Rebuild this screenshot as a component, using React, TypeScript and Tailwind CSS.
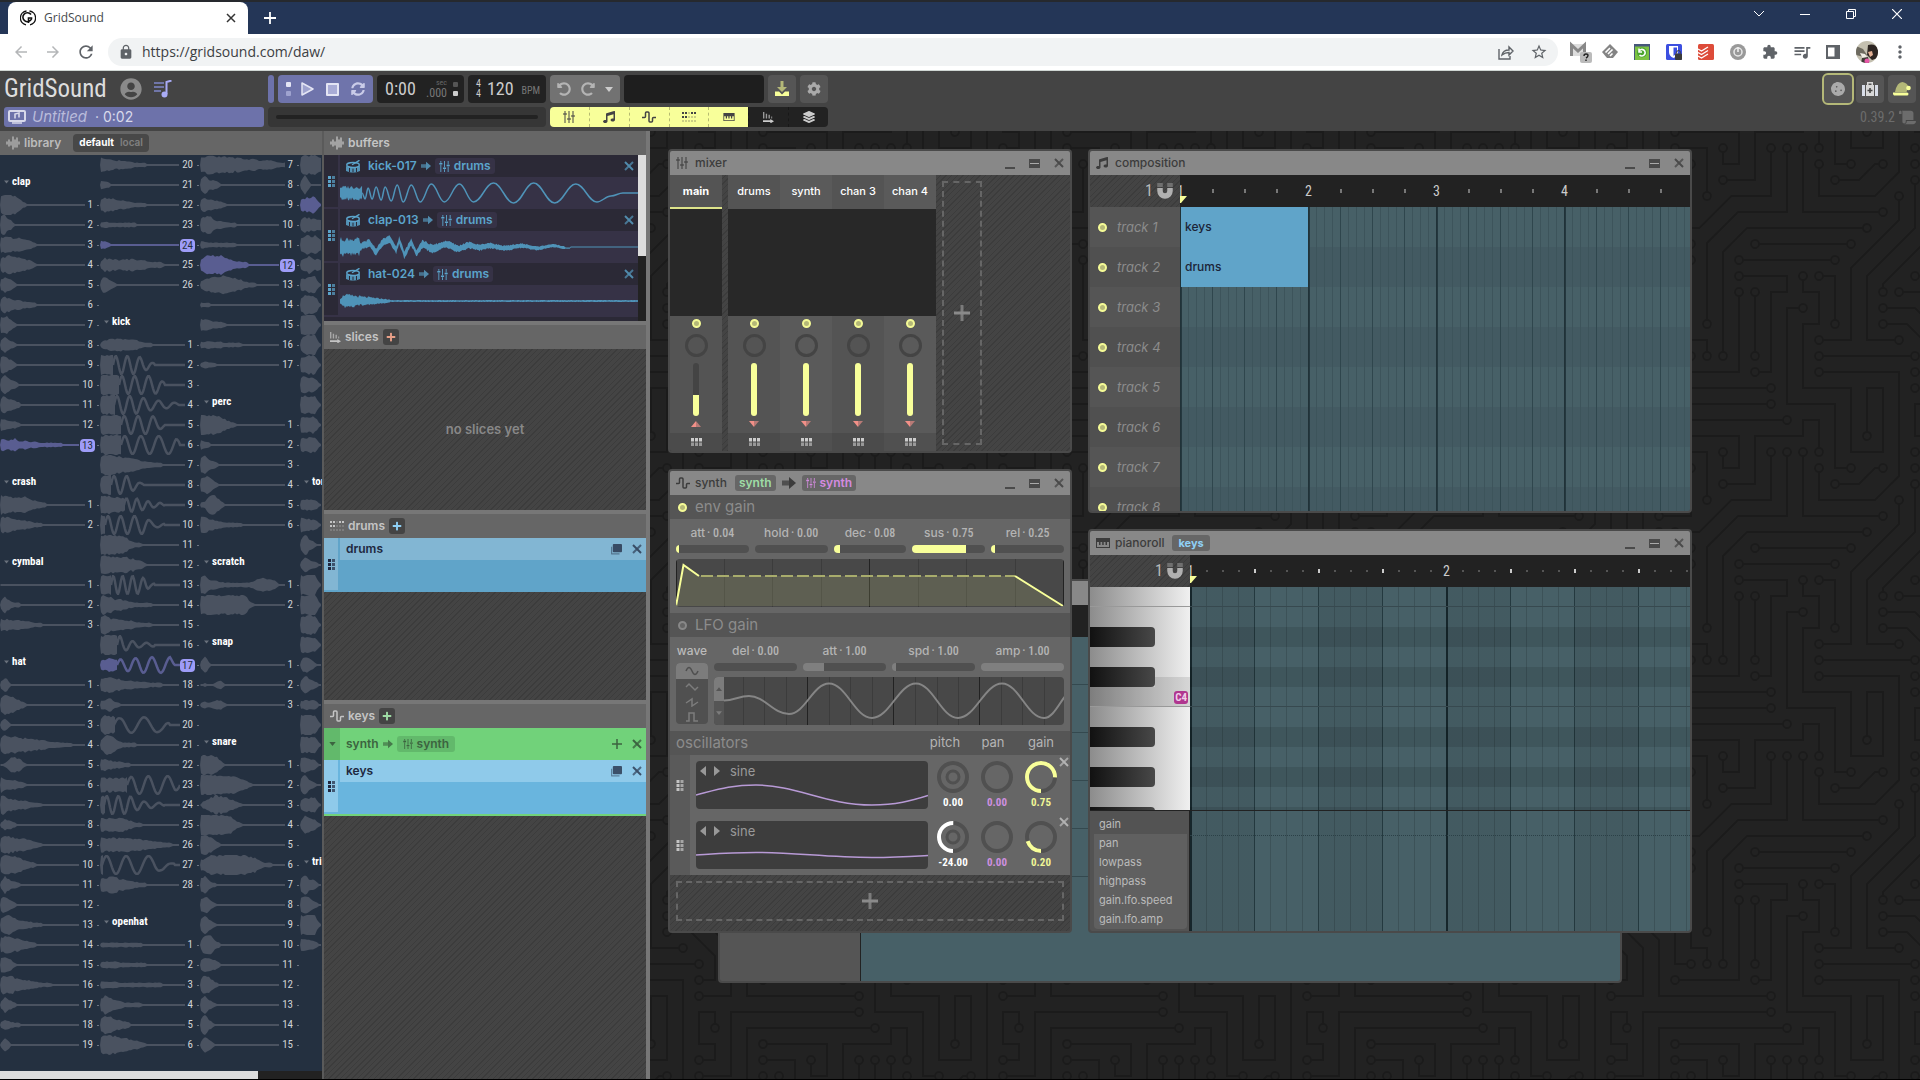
import React from "react";
import {
  MdArrowBack, MdArrowForward, MdRefresh, MdLock, MdStarBorder, MdExtension, MdQueueMusic, MdMoreVert,
} from "react-icons/md";
import {
  FaUserCircle, FaSyncAlt, FaUndoAlt, FaRedoAlt, FaCog, FaLayerGroup, FaCookie, FaScroll, FaMusic, FaPlus,
} from "react-icons/fa";

/* ---------- shared classes ---------- */
const UI = "font-['Inter','Noto_Sans',sans-serif]";
const NARROW = "font-['Roboto_Condensed','Roboto',sans-serif]";
const STRIPES = "bg-[repeating-linear-gradient(135deg,#444_0px,#444_3px,#3c3c3c_3px,#3c3c3c_4px)]";

/* ---------- circuit board backdrop ---------- */
const CIRCUIT =
  "M44.1 224a5 5 0 1 1 0 2H0v-2h44.1zm160 48a5 5 0 1 1 0 2H82v-2h122.1zm57.8-46a5 5 0 1 1 0-2H304v2h-42.1zm0 16a5 5 0 1 1 0-2H304v2h-42.1zm6.2-114a5 5 0 1 1 0 2h-86.2a5 5 0 1 1 0-2h86.2zm-256-48a5 5 0 1 1 0 2H0v-2h12.1zm185.8 34a5 5 0 1 1 0-2h86.2a5 5 0 1 1 0 2h-86.2zM258 12.1a5 5 0 1 1-2 0V0h2v12.1zm-64 208a5 5 0 1 1-2 0v-54.2a5 5 0 1 1 2 0v54.2zm48-198.2V80h62v2h-64V21.9a5 5 0 1 1 2 0zm16 16V64h46v2h-48V37.9a5 5 0 1 1 2 0zm-128 96V208h16v12.1a5 5 0 1 1-2 0V210h-16v-76.1a5 5 0 1 1 2 0zm-5.9-21.9a5 5 0 1 1 0 2H114v48H85.9a5 5 0 1 1 0-2H112v-48h12.1zm-6.2 130a5 5 0 1 1 0-2H176v-74.1a5 5 0 1 1 2 0V242h-60.1zm-16-64a5 5 0 1 1 0-2H114v48h10.1a5 5 0 1 1 0 2H112v-48h-10.1zM66 284.1a5 5 0 1 1-2 0V274H50v30h-2v-32h18v12.1zM236.1 176a5 5 0 1 1 0 2H226v94h48v32h-2v-30h-48v-98h12.1zm25.8-30a5 5 0 1 1 0-2H274v44.1a5 5 0 1 1-2 0V146h-10.1zm-64 96a5 5 0 1 1 0-2H208v-80h16v-14h-42.1a5 5 0 1 1 0-2H226v18h-16v80h-12.1zm86.2-210a5 5 0 1 1 0 2H272V0h2v32h10.1zM98 101.9V146H53.9a5 5 0 1 1 0-2H96v-42.1a5 5 0 1 1 2 0zM53.9 34a5 5 0 1 1 0-2H80V0h2v34H53.9zm60.1 3.9V66H82v64H69.9a5 5 0 1 1 0-2H80V64h32V37.9a5 5 0 1 1 2 0zM101.9 82a5 5 0 1 1 0-2H128V37.9a5 5 0 1 1 2 0V82h-28.1zm16-64a5 5 0 1 1 0-2H146v44.1a5 5 0 1 1-2 0V18h-26.1zm102.2 270a5 5 0 1 1 0 2H98v14h-2v-16h124.1zM242 149.9V160h16v34h-16v62h48v48h-2v-46h-48v-66h16v-30h-16v-12.1a5 5 0 1 1 2 0zM53.9 18a5 5 0 1 1 0-2H64V2H48V0h18v18H53.9zm112 32a5 5 0 1 1 0-2H192V0h50v2h-48v48h-28.1zm-48-48a5 5 0 0 1-9.8-2h2.07a3 3 0 1 0 5.66 0H178v34h-18V21.9a5 5 0 1 1 2 0V32h14V2h-58.1zm0 96a5 5 0 1 1 0-2H137l32-32h39V21.9a5 5 0 1 1 2 0V66h-40.17l-32 32H117.9zm28.1 90.1a5 5 0 1 1-2 0v-76.51L175.59 80H224V21.9a5 5 0 1 1 2 0V82h-49.59L146 112.41v75.69zm16 32a5 5 0 1 1-2 0v-99.51L184.59 96H300.1a5 5 0 0 1 3.9-3.9v2.07a3 3 0 0 0 0 5.66v2.07a5 5 0 0 1-3.9-3.9H185.41L162 121.41v98.69zm-144-64a5 5 0 1 1-2 0v-3.51l48-48V48h32V0h2v50H66v55.41l-48 48v2.69zM50 53.9v43.51l-48 48V208h26.1a5 5 0 1 1 0 2H0v-65.41l48-48V53.9a5 5 0 1 1 2 0zm-16 16V89.41l-34 34v-2.82l32-32V69.9a5 5 0 1 1 2 0zM12.1 32a5 5 0 1 1 0 2H9.41L0 43.41V40.6L8.59 32h3.51zm265.8 18a5 5 0 1 1 0-2h18.69l7.41-7.41v2.82L297.41 50H277.9zm-16 160a5 5 0 1 1 0-2H288v-71.41l16-16v2.82l-14 14V210h-28.1zm-208 32a5 5 0 1 1 0-2H64v-22.59L40.59 194H21.9a5 5 0 1 1 0-2H41.41L66 216.59V242H53.9zm150.2 14a5 5 0 1 1 0 2H96v-56.6L56.6 162H37.9a5 5 0 1 1 0-2h19.5L98 200.6V256h106.1zm-150.2 2a5 5 0 1 1 0-2H80v-46.59L48.59 178H21.9a5 5 0 1 1 0-2H49.41L82 208.59V258H53.9zM34 39.8v1.61L9.41 66H0v-2h8.59L32 40.59V0h2v39.8zM2 300.1a5 5 0 0 1 3.9 3.9H3.83A3 3 0 0 0 0 302.17V256h18v48h-2v-46H2v42.1zM34 241v63h-2v-62H0v-2h34v1zM17 18H0v-2h16V0h2v18h-1zm273-2h14v2h-16V0h2v16zm-32 273v15h-2v-14h-14v14h-2v-16h18v1zM0 92.1A5.02 5.02 0 0 1 6 97a5 5 0 0 1-6 4.9v-2.07a3 3 0 1 0 0-5.66V92.1zM80 272h2v32h-2v-32zm37.9 32h-2.07a3 3 0 0 0-5.66 0h-2.07a5 5 0 0 1 9.8 0zM5.9 0A5.02 5.02 0 0 1 0 5.9V3.83A3 3 0 0 0 3.83 0H5.9zm294.2 0h2.07A3 3 0 0 0 304 3.83V5.9a5 5 0 0 1-3.9-5.9zm3.9 300.1v2.07a3 3 0 0 0-1.83 1.83h-2.07a5 5 0 0 1 3.9-3.9z";

/* Centres of the round pads that end each trace. */
function padCentres(d: string): [number, number][] {
  const tokens = d.match(/[a-zA-Z]|-?\d*\.?\d+/g) || [];
  const out: [number, number][] = [];
  let x = 0, y = 0, sx = 0, sy = 0, i = 0, cmd = "";
  const n = () => parseFloat(tokens[i++]);
  while (i < tokens.length) {
    if (/[a-zA-Z]/.test(tokens[i])) cmd = tokens[i++];
    if (cmd === "z") { x = sx; y = sy; continue; }
    if (cmd === "M") { x = n(); y = n(); sx = x; sy = y; cmd = "L"; }
    else if (cmd === "m") { x += n(); y += n(); sx = x; sy = y; cmd = "l"; }
    else if (cmd === "L") { x = n(); y = n(); }
    else if (cmd === "l") { x += n(); y += n(); }
    else if (cmd === "H") x = n();
    else if (cmd === "h") x += n();
    else if (cmd === "V") y = n();
    else if (cmd === "v") y += n();
    else if (cmd === "A" || cmd === "a") {
      const r = n(); n(); n();
      const large = n(); n();
      let dx = n(), dy = n();
      if (cmd === "A") { dx -= x; dy -= y; }
      if (r === 5 && large === 1) out.push([x + dx / 2 + dy * 2.45, y + dy / 2 - dx * 2.45]);
      x += dx; y += dy;
    } else i++;
  }
  return out;
}
const PADS = padCentres(CIRCUIT);

function Backdrop() {
  return (
    <svg className="absolute inset-0 h-full w-full" aria-hidden="true">
      <defs>
        <pattern id="circuit" width="304" height="304" patternUnits="userSpaceOnUse">
          <path d={CIRCUIT} fill="#1b1b1b" />
          {PADS.map(([cx, cy], k) => <circle key={k} cx={cx} cy={cy} r="3" fill="#222" />)}
        </pattern>
      </defs>
      <rect width="100%" height="100%" fill="url(#circuit)" />
    </svg>
  );
}

/* ---------- icons ---------- */
type IconProps = { className?: string };
const Faders = ({ className = "" }: IconProps) => (
  <svg viewBox="0 0 12 12" className={className} fill="none" stroke="currentColor" strokeWidth="1">
    <path d="M2 0v2M2 4v8M6 0v7M6 9v3M10 0v4M10 6v6" />
    <path d="M.3 3h3.4M4.3 8h3.4M8.3 5h3.4" strokeWidth="1.6" />
  </svg>
);
const Pulse = ({ className = "" }: IconProps) => (
  <svg viewBox="0 0 14 12" className={className} fill="none" stroke="currentColor" strokeWidth="1.5">
    <path d="M0 6.500h2.500q1 0 1-1V2q0-1 1-1H6q1 0 1 1v8q0 1 1 1h1.500q1 0 1-1V7.500q0-1 1-1H14" />
  </svg>
);
const Dots = ({ className = "" }: IconProps) => (
  <svg viewBox="0 0 14 10" className={className} fill="currentColor">
    {[0, 1, 2, 3, 4].map((c) => [0, 1, 2].map((r) => {
      const big = (r === 0 && c !== 2) || (r === 1 && c < 2);
      const s = big ? 2 : 1;
      return <rect key={`${c}-${r}`} x={c * 3 + (2 - s) / 2} y={r * 4 + (2 - s) / 2} width={s} height={s} />;
    }))}
  </svg>
);
const PianoIcon = ({ className = "" }: IconProps) => (
  <svg viewBox="0 0 14 10" className={className} fill="currentColor">
    <path d="M0 0h14v4H0zM0 4h1v6H0zM13 4h1v6h-1zM0 9h14v1H0zM3 4h1.500v3H3zM6.200 4h1.500v3H6.200zM9.500 4H11v3H9.500z" />
  </svg>
);
const SlicesIcon = ({ className = "" }: IconProps) => (
  <svg viewBox="0 0 12 12" className={className} fill="currentColor">
    <path d="M0 0h1.500v7H0zM3 2h1.500v5H3zM6 3h1.500v4H6zM9 5h1v2H9z" opacity=".7" />
    <path d="M0 9h8V7.500l4 2.500-4 2.500V11H0z" />
  </svg>
);
const Sound = ({ className = "" }: IconProps) => (
  <svg viewBox="0 0 14 14" className={className} stroke="currentColor" strokeWidth="1.300" strokeLinecap="round">
    <path d="M1 6v2M3 4v6M5 6v3M7 1v12M9 4v7M11 2v9M13 6v2" />
  </svg>
);
const Drum = ({ className = "" }: IconProps) => (
  <svg viewBox="0 0 14 13" className={className}>
    <path d="M0 6q7 3.500 14 0v5q-7 3.500-14 0z" fill="currentColor" opacity=".85" />
    <path d="M3.500 8v4M7 8.500v4M10.500 8v4" stroke="#2b2936" strokeWidth="1" />
    <ellipse cx="7" cy="5" rx="6.300" ry="2.500" fill="none" stroke="currentColor" strokeWidth="1.400" />
    <path d="M6.500 4.500L13 .7" stroke="currentColor" strokeWidth="1.400" strokeLinecap="round" />
  </svg>
);
const Magnet = ({ className = "" }: IconProps) => (
  <svg viewBox="0 0 16 16" className={className} fill="none">
    <path d="M3 5v3a5 5 0 0 0 10 0V5" stroke="#b0b0b0" strokeWidth="5.500" />
    <path d="M.2 0h5.600v4H.2zM10.200 0h5.600v4h-5.600z" fill="#707070" />
  </svg>
);
const Arrow = ({ className = "" }: IconProps) => (
  <svg viewBox="0 0 14 12" className={className} fill="currentColor">
    <path d="M0 3.500h8v5H0z" opacity=".75" /><path d="M7 0l7 6-7 6z" />
  </svg>
);
const Cross = ({ className = "" }: IconProps) => (
  <svg viewBox="0 0 10 10" className={className} stroke="currentColor" strokeWidth="2">
    <path d="M1 1l8 8" /><path d="M9 1l-8 8" opacity=".8" />
  </svg>
);
const Grip = ({ className = "" }: IconProps) => (
  <svg viewBox="0 0 7 11" className={className} fill="currentColor">
    {[0, 4, 8].map((y) => <g key={y}><rect x="0" y={y} width="3" height="3" /><rect x="4" y={y} width="3" height="3" opacity=".7" /></g>)}
  </svg>
);
const Copy = ({ className = "" }: IconProps) => (
  <svg viewBox="0 0 12 12" className={className} fill="currentColor">
    <path d="M3 0h8q1 0 1 1v7q0 1-1 1H3q-1 0-1-1V1q0-1 1-1z" />
    <path d="M0 3h1.300v7h8v1.500H1q-1 0-1-1z" opacity=".6" />
  </svg>
);
const Caret = ({ className = "" }: IconProps) => (
  <svg viewBox="0 0 8 5" className={className} fill="currentColor"><path d="M0 0h8L4 5z" /></svg>
);
const Led = ({ on = true }: { on?: boolean }) => (
  <span className={on ? "block size-[9px] rounded-full border-2 border-[#f4fa96] bg-[#b4b878]" : "block size-[9px] rounded-full border-2 border-[#888] bg-[#666]"} />
);

/* ---------- waveforms ---------- */
function noise(i: number, seed: number) {
  const v = Math.sin(i * 12.9898 + seed * 78.233) * 43758.5453;
  return v - Math.floor(v);
}
/* env: one digit (0-9) for each 5px; osc: [start, period] turns the tail into a line that swings. */
function Wave({ env, w, seed, hot, osc }: { env: string; w: number; seed: number; hot?: boolean; osc?: [number, number] }) {
  const amp = (x: number) => {
    const p = x / 5, i = Math.floor(p), f = p - i;
    const a = +(env[i] || 1), b = +(env[i + 1] || 1);
    return ((a * (1 - f) + b * f) * 10) / 9;
  };
  const end = osc ? osc[0] : w;
  const up: string[] = [], down: string[] = [];
  for (let x = 1; x <= end; x += 2) {
    const a = amp(x);
    const h = Math.max(1, a > 2 ? a * (0.85 + 0.3 * noise(x, seed)) : 1);
    up.push(`${x},${10 - Math.min(10, h)}`);
    down.unshift(`${x},${10 + Math.min(10, h * (a > 2 ? 0.9 + 0.15 * noise(x, seed + 9) : 1))}`);
  }
  const line: string[] = [];
  if (osc) {
    let ph = 0;
    for (let x = osc[0] - 1; x <= w; x++) {
      line.push(`${x},${10 - Math.min(9, amp(x) > 1.2 ? amp(x) : 0) * Math.sin(ph)}`);
      ph += (Math.PI * 2) / (osc[1] * (1 + (x - osc[0]) / 140));
    }
  }
  const color = hot ? "#595d91" : "#4a5260";
  return (
    <svg width={w} height="20" viewBox={`0 0 ${w} 20`} className="shrink-0" aria-hidden="true">
      <polygon points={[`0,10`, ...up, ...down].join(" ")} fill={color} />
      {osc && <polyline points={line.join(" ")} fill="none" stroke={color} strokeWidth="2.500" />}
    </svg>
  );
}

type Sample = { n: number; env: string; osc?: [number, number]; hot?: boolean };
type Entry = string | Sample[];
/* Space-separated "env", "env@start,period" or "env!"; a trailing ! marks a sample in use. */
function rows(from: number, spec: string): Sample[] {
  return spec.split(" ").map((s, i) => {
    const hot = s.endsWith("!");
    const [env, o] = s.replace("!", "").split("@");
    const osc = o ? (o.split(",").map(Number) as [number, number]) : undefined;
    return { n: from + i, env, osc, hot };
  });
}
const LIBRARY: Entry[][] = [
  [
    "clap", rows(1, "99985211 8851 6876654211 678765421 4852 5854433211 686211 4742 6852 6853 585421 55432111 55463433222221!"),
    "crash", rows(1, "89776854321111 77654432211"),
    "cymbal", rows(1, "11111 3832211111 55544332211111"),
    "hat", rows(1, "2721 69864211 262111 78776655443322211 1267521 75543211 88554432211111 254211 68765643211 688764321 284321 585211 699643322111 6876543211 585211 688654432221 28421 2532211 1721111"),
  ],
  [
    rows(20, "86544432221111 4321 466544322211 2322222211 4321111111! 3655455544333 38421"),
    "kick", rows(1, "24555555322111 999999987531@14,11 9999999999986111@20,12 6999999876544332@15,12 9999999999974111@22,13 8999999999999999@22,15 8998766543322 699999742111@12,12 88876666543221@25,10 99999999974221@6,12 799987422111 888777654211 9999999976211@12,9 88755432222 79655443222 79998543222@18,12 456555667777777@18,14! 6776544333222 44632111 49876777777766@15,22 399632221 5543322 8666667888888887@28,16 7898888543322@5,11 6666654221 666666655443322 99999999999854211@3,18 5677554322"),
    "openhat", rows(1, "2222222221 2333222222 4333222222222 687442222 687543211 799876543211"),
  ],
  [
    rows(7, "678777766555444322 494421111 5654321111 578443221 3322222211 4797975333! 3577887653221 2221111111 5543321111 333332222 232211"),
    "perc", rows(1, "999875321111 5321 58431 68631 238841 785432222"),
    "scratch", rows(1, "68443222222466541 999999999931"),
    "snap", rows(1, "281 1212411 232442"),
    "snare", rows(1, "9998411 999999876421 146887542111 9999998421 898421 468889999876422 583211 58421 68421 389421 47542 59631 48421 594111 2741"),
  ],
  [
    rows(18, "79888 39211 5677! 47655 688855 46855 5677 6888 8998 4999 6899 5866 7888 7777 6677"),
    "tom", rows(1, "4555 6655 3952 2743 9999 8999 7898 8767 3852 3953 3444 9999 8777 6654 5942 4666 3865"),
    "tri", rows(1, "5854 6863 9998 5643"),
  ],
];

function Library() {
  return (
    <div className="flex min-h-0 flex-1 overflow-hidden bg-[#243040]">
      {LIBRARY.map((col, c) => {
        const partial = c === 3;
        return (
          <div key={c} className={partial ? "min-w-0 flex-1 overflow-hidden" : "w-[100px] shrink-0"}>
            {col.map((e, k) =>
              typeof e === "string" ? (
                <button key={k} className={`flex h-10 w-full items-end pb-1 pl-1 text-left text-[11px] leading-[18px] font-bold text-white ${NARROW}`}>
                  <Caret className="mr-[3px] mb-[7px] h-1 w-[5px] shrink-0 text-[#69717c]" />
                  {e}
                </button>
              ) : (
                <div key={k}>
                  {e.map((s) => (
                    <div key={s.n} className="flex h-5 items-center">
                      <Wave env={s.env} w={partial ? 22 : s.hot || s.n > 9 ? 80 : 85} seed={s.n + c * 40 + k} hot={s.hot} osc={s.osc} />
                      {!partial && <>
                        <span className={s.hot
                          ? `block h-[13px] w-[15px] shrink-0 rounded-sm bg-[#9e9cf8] text-center text-[11px] leading-[13px] text-[#243040] ${NARROW}`
                          : `${s.n > 9 ? "w-[13px]" : "w-2"} text-right text-[11px] leading-5 text-[#d0d3d6] ${NARROW}`}>{s.n}</span>
                        <span className={s.hot ? "ml-0.5 h-px w-0.5 bg-[#6b7380]" : "ml-1 h-px w-0.5 bg-[#6b7380]"} />
                      </>}
                    </div>
                  ))}
                </div>
              ),
            )}
          </div>
        );
      })}
    </div>
  );
}

/* Smooth curve through alternating extremes. */
function swing(pts: [number, number][]) {
  let d = `M${pts[0][0]} ${pts[0][1]}`;
  for (let i = 1; i < pts.length; i++) {
    const [ax, ay] = pts[i - 1], [bx, by] = pts[i], m = (bx - ax) * 0.4;
    d += `C${ax + m} ${ay} ${bx - m} ${by} ${bx} ${by}`;
  }
  return d;
}
function blob(w: number, amp: (x: number) => number, mid: (x: number) => number, seed: number) {
  const up: string[] = [], down: string[] = [];
  for (let x = 0; x <= w; x += 1) {
    const a = amp(x);
    up.push(`${x},${16 + mid(x) - a * (0.6 + 0.6 * noise(x, seed)) - 0.5}`);
    down.unshift(`${x},${16 + mid(x) + a * (0.6 + 0.6 * noise(x, seed + 4)) + 0.5}`);
  }
  return [...up, ...down].join(" ");
}
const KICK: [number, number][] = [
  [22, 16], [25, 22], [28, 11], [32, 22], [36, 10], [41, 23], [45, 10], [51, 24], [57, 8], [63, 25], [71, 8], [80, 25], [91, 7], [104, 25], [119, 7], [133, 25],
  [153, 6], [173, 26], [193, 6], [214, 26], [235, 7], [256, 25], [270, 19], [282, 16], [297, 16],
];
const CLAP_MID: [number, number][] = [[20, 0], [29, -4], [36, 5], [42, -4], [49, -8], [56, 3], [59, -7], [64, 8], [71, -5], [76, 6], [82, -3], [92, 2], [106, -3], [118, 2], [128, -2], [140, 1], [297, 0]];
function clapMid(x: number) {
  if (x <= 20 || x >= 140) return x > 140 && x < 230 ? Math.sin(x / 5) * 1.2 : 0;
  const k = CLAP_MID.findIndex((p) => p[0] > x);
  const [ax, ay] = CLAP_MID[k - 1], [bx, by] = CLAP_MID[k];
  return ay + ((by - ay) * (x - ax)) / (bx - ax);
}
const BUFFERS = [
  { name: "kick-017", art: <><polygon points={blob(22, () => 6, () => 0, 3)} fill="#4f93b8" /><path d={swing(KICK)} fill="none" stroke="#4f93b8" strokeWidth="1.500" /></> },
  { name: "clap-013", art: <polygon fill="#4f93b8" points={blob(297, (x) => (x < 20 ? 8 : x < 80 ? 3.2 : x < 225 ? 3.8 - (x - 80) / 50 : 0.1), clapMid, 8)} /> },
  { name: "hat-024", art: <polygon fill="#4f93b8" points={blob(297, (x) => (x < 6 ? 2 + x : x < 50 ? 6.5 - x * 0.11 : 0.4), () => 0, 5)} /> },
];

function BufferItem({ name, art }: { name: string; art?: React.ReactNode }) {
  return (
    <div className="flex h-[54px] shrink-0 gap-0.5 bg-[#363246] text-[#5ba4cb]">
      <div className="mb-0.5 flex w-3.5 items-center justify-center bg-[#2b2936]"><Grip className="h-[11px] w-[7px]" /></div>
      <div className="min-w-0 flex-1">
        <div className="flex h-[22px] items-center bg-[#2b2936] pl-1.5 pr-1 text-xs font-semibold">
          <Drum className="mr-2 h-[13px] w-3.5" />
          {name}
          <Arrow className="mx-1 size-2.5 opacity-80" />
          <button className="flex h-4 items-center gap-1 rounded-[3px] bg-[#363246] px-1"><Faders className="size-[11px]" />drums</button>
          <button aria-label={`Remove ${name}`} className="ml-auto opacity-80"><Cross className="size-2.5" /></button>
        </div>
        <svg className="h-8 w-full" viewBox="0 0 297 32" preserveAspectRatio="none">{art}</svg>
      </div>
    </div>
  );
}

function PanelHead({ icon, title, plus }: { icon: React.ReactNode; title: string; plus?: string }) {
  return (
    <div className="flex h-6 shrink-0 items-center gap-1 bg-[#666] px-1.5 text-xs font-semibold text-[#c4c4c4]">
      {icon}
      <h2>{title}</h2>
      {plus && <button aria-label={`New ${title}`} className={`flex size-4 items-center justify-center rounded-[3px] bg-[#444] ${plus}`}><FaPlus className="size-2.5" /></button>}
    </div>
  );
}

function PatternItem({ name, head, body }: { name: string; head: string; body: string }) {
  return (
    <div className={`flex h-[54px] gap-0.5 text-[#20283f] ${body}`}>
      <div className={`mb-0.5 flex w-3.5 items-center justify-center ${head}`}><Grip className="h-[11px] w-[7px]" /></div>
      <div className={`flex h-[22px] flex-1 items-center pl-1.5 pr-1 text-xs font-semibold ${head}`}>
        {name}
        <button aria-label={`Duplicate ${name}`} className="ml-auto opacity-75"><Copy className="size-[11px]" /></button>
        <button aria-label={`Remove ${name}`} className="ml-2.5 opacity-75"><Cross className="size-2.5" /></button>
      </div>
    </div>
  );
}

/* ---------- window frame ---------- */
function Window({ place, icon, title, extra, children }: { place: string; icon: React.ReactNode; title: string; extra?: React.ReactNode; children: React.ReactNode }) {
  return (
    <section className={`absolute flex flex-col overflow-hidden rounded border-2 border-[#4a4a4a] bg-[#444] ${place}`}>
      <header className="flex h-6 shrink-0 items-center bg-[#888] px-1.5 text-xs font-medium text-[#3c3c3c]">
        <span className="flex w-[19px]">{icon}</span>
        <h2>{title}</h2>
        {extra}
        <div className="ml-auto flex items-center text-[#4a4a4a]">
          <button aria-label="Minimize" className="mr-3.5 flex h-3 w-2.5 items-end"><span className="h-0.5 w-full bg-current" /></button>
          <button aria-label="Maximize" className="mr-3.5 block h-[9px] w-[11px] border border-current bg-current"><span className="block h-px w-full bg-[#aaa]" /></button>
          <button aria-label="Close"><Cross className="size-2.5" /></button>
        </div>
      </header>
      {children}
    </section>
  );
}

/* ---------- sliders and knobs ---------- */
function HSlider({ label, value, fill = "#f8ff9a" }: { label: string; value: number; fill?: string }) {
  return (
    <input type="range" aria-label={label} min={0} max={100} defaultValue={value}
      className="block h-2 w-full appearance-none rounded-sm [&::-webkit-slider-thumb]:size-0 [&::-webkit-slider-thumb]:appearance-none"
      style={{ background: `linear-gradient(to right, ${fill} ${value}%, #505050 ${value}%)` }} />
  );
}
function Knob({ label, color, from, len, inner, text, tone }: { label: string; color: string; from: number; len: number; inner?: boolean; text: string; tone: string }) {
  const C = 2 * Math.PI * 14;
  return (
    <div className="flex w-11 flex-col items-center">
      <div className="relative size-8">
        <svg className="size-8" viewBox="0 0 32 32" fill="none" strokeWidth="4">
          <circle cx="16" cy="16" r="14" stroke="#505050" />
          {inner && <circle cx="16" cy="16" r="6" stroke="#505050" strokeWidth="3" />}
          {len > 0 && <circle cx="16" cy="16" r="14" stroke={color} strokeDasharray={`${C * len} ${C}`} transform={`rotate(${from} 16 16)`} />}
        </svg>
        <input type="range" aria-label={label} className="absolute inset-0 size-8 opacity-0" />
      </div>
      <span className={`pt-px text-[11px] leading-[18px] font-bold ${NARROW} ${tone}`}>{text}</span>
    </div>
  );
}

/* ---------- mixer ---------- */
function Channel({ name, gain, main, alt }: { name: string; gain: number; main?: boolean; alt?: boolean }) {
  return (
    <div className={`flex w-[52px] flex-col items-center ${alt ? "bg-[#5a5a5a]" : "bg-[#545454]"}`}>
      <button className={`h-[34px] w-full border-b-2 pt-px text-[11px] whitespace-nowrap text-white ${main ? "border-[#dde38a] font-bold" : "border-transparent font-medium"}`}>{name}</button>
      <div className="h-[107px] w-full bg-[#282828]" />
      <button aria-label={`Toggle ${name}`} className="mt-[3px]"><Led /></button>
      <span className="mt-1.5 size-[23px] rounded-full border-[3px] border-[#444]" />
      <input type="range" aria-label={`${name} gain`} min={0} max={100} defaultValue={gain}
        className="mt-1.5 h-[53px] w-1.5 appearance-none rounded-sm [writing-mode:vertical-lr] [&::-webkit-slider-thumb]:size-0 [&::-webkit-slider-thumb]:appearance-none"
        style={{ background: `linear-gradient(to top, #f8ff9a ${gain}%, #444 ${gain}%)` }} />
      <svg viewBox="0 0 10 6" className="mt-[5px] h-1.5 w-2.5">
        <g transform={main ? "" : "rotate(180 5 3)"}><path d="M5 0v6H0z" fill={main ? "#f29088" : "#b87a76"} /><path d="M5 0l5 6H5z" fill={main ? "#b87a76" : "#f29088"} /></g>
      </svg>
      <button aria-label={`${name} effects`} className="mt-auto flex h-[18px] w-full items-center justify-center bg-black/10 text-[#ccc]">
        <svg viewBox="0 0 11 8" className="h-2 w-[11px]" fill="currentColor">
          {[0, 4, 8].map((x) => <g key={x}><rect x={x} width="3" height="3.500" /><rect x={x} y="4.500" width="3" height="3.500" opacity=".6" /></g>)}
        </svg>
      </button>
    </div>
  );
}
function AddBox({ label, className }: { label: string; className: string }) {
  return (
    <button aria-label={label} className={`flex items-center justify-center border-2 border-dashed border-[#666] text-[#8a8a8a] ${className}`}>
      <svg viewBox="0 0 16 16" className="size-4" stroke="currentColor" strokeWidth="3"><path d="M8 0v16" opacity=".8" /><path d="M0 8h16" /></svg>
    </button>
  );
}

/* ---------- timelines ---------- */
function Ruler({ step, unit, marks, subs }: { step: number; unit: number; marks: string[]; subs: number }) {
  return (
    <div className={`relative min-w-0 flex-1 overflow-hidden bg-[#222] text-sm text-[#ccc] ${NARROW}`}>
      <div className="flex h-full">
        {marks.map((m) => (
          <div key={m} className="flex h-full shrink-0 items-center" style={{ width: unit }}>
            {Array.from({ length: unit / step }, (_, i) => (
              <span key={i} className="flex shrink-0 items-center" style={{ width: step }}>
                {i === 0 ? <span className="-ml-[3px]">{m}</span>
                  : <span className={i % subs === 0 ? `h-1 w-0.5 ${subs > 1 ? "bg-[#ccc]" : "bg-[#777]"}` : "size-0.5 bg-[#555]"} />}
              </span>
            ))}
          </div>
        ))}
      </div>
      <svg viewBox="0 0 7 7" className="absolute bottom-1 left-0 size-[7px]"><path d="M0 0h7L1 7H0z" fill="#f8ff9a" /></svg>
    </div>
  );
}
const Snap = ({ w }: { w: string }) => (
  <div className={`flex shrink-0 items-center justify-end gap-1 pr-[7px] text-base text-[#bbb] ${NARROW} ${STRIPES} ${w}`}>
    <button>1</button>
    <button aria-label="Snap"><Magnet className="size-4" /></button>
  </div>
);

const COMP_GRID =
  "bg-[repeating-linear-gradient(90deg,#1f2f35_0px,#263b42_2px,transparent_2px,transparent_128px),repeating-linear-gradient(90deg,#2f464d_0px,#2f464d_1px,transparent_1px,transparent_32px),repeating-linear-gradient(90deg,#3d545b_0px,#3d545b_1px,transparent_1px,transparent_8px)]";
const ROLL_GRID =
  "bg-[repeating-linear-gradient(90deg,#16262b_0px,#16262b_2px,transparent_2px,transparent_256px),repeating-linear-gradient(90deg,#24393f_0px,#24393f_1px,transparent_1px,transparent_64px),repeating-linear-gradient(90deg,#00000026_0px,#00000026_1px,transparent_1px,transparent_16px),repeating-linear-gradient(90deg,#0000000f_0px,#0000000f_64px,transparent_64px,transparent_128px)]";

function Composition() {
  return (
    <Window place="left-[438px] top-[18px] h-[364px] w-[604px]" icon={<FaMusic className="size-3" />} title="composition">
      <div className="flex h-8 shrink-0"><Snap w="w-[90px]" /><Ruler step={32} unit={128} subs={1} marks={["1", "2", "3", "4"]} /></div>
      <div className="flex min-h-0 flex-1">
        <div className="w-[90px] shrink-0 overflow-hidden">
          {[1, 2, 3, 4, 5, 6, 7, 8].map((t) => (
            <div key={t} className={`flex h-10 items-center gap-2.5 pt-px pl-2 text-[13px] text-[#8c8c8c] italic ${t % 2 ? "bg-[#555]" : "bg-[#505050]"}`}>
              <button aria-label={`Toggle track ${t}`}><Led /></button>track {t}
            </div>
          ))}
        </div>
        <div className="relative min-w-0 flex-1 overflow-hidden bg-[repeating-linear-gradient(180deg,#476067_0px,#476067_40px,#435a62_40px,#435a62_80px)]">
          <div className={`h-full w-full ${COMP_GRID}`} />
          <div className="absolute top-0 left-px w-[127px] bg-[#60a4c9] text-xs font-medium text-[#1c2538]">
            <div className="flex h-10 items-center pl-1">keys</div>
            <div className="flex h-10 items-center pl-1">drums</div>
          </div>
        </div>
      </div>
    </Window>
  );
}

/* Rows from the top of the visible keyboard: true where the key is black. */
const KEYS = [false, false, true, false, true, false, false, true, false, true, false, true];
const PARAMS = ["pan", "lowpass", "highpass", "gain.lfo.speed", "gain.lfo.amp"];
function PianoRoll() {
  return (
    <Window place="left-[438px] top-[398px] h-[404px] w-[604px]" icon={<PianoIcon className="h-2.5 w-3.5" />} title="pianoroll"
      extra={<button className="ml-2 h-4 rounded-[3px] bg-[#666] px-1.5 text-[11px] leading-4 font-bold text-[#8fd0f5]">keys</button>}>
      <div className="flex h-8 shrink-0"><Snap w="w-[100px]" /><Ruler step={16} unit={256} subs={4} marks={["1", "2"]} /></div>
      <div className="flex h-[223px] shrink-0 overflow-hidden">
        <div className="relative w-[100px] shrink-0 overflow-hidden bg-[linear-gradient(90deg,#8c8c8c,#f0f0f0)]">
          {KEYS.map((black, k) => (
            <div key={k} className={`h-5 ${k === 0 || k === 5 ? "border-b border-[#999]" : ""} ${k === 5 ? "flex items-center justify-end bg-black/10 pt-px pr-0.5" : ""} ${k === 4 ? "flex items-end" : ""}`}>
              {black && <div className="h-5 w-[65px] rounded-r-sm bg-[linear-gradient(90deg,#111,#484848)]" />}
              {k === 4 && <div className="h-2.5 flex-1 bg-black/10" />}
              {k === 5 && <span className={`rounded-[3px] bg-[#b0368f] px-px text-[11px] leading-[13px] font-bold text-[#f0d0e8] ${NARROW}`}>C4</span>}
            </div>
          ))}
        </div>
        <div className={`min-w-0 flex-1 bg-[#476067] ${ROLL_GRID}`}>
          {KEYS.map((black, k) => <div key={k} className={`h-5 ${black ? "bg-black/10" : ""} ${k === 0 || k === 5 ? "border-b border-[#37494f]" : ""}`} />)}
        </div>
      </div>
      <div className="flex min-h-0 flex-1 border-t border-[#222]">
        <div className="w-[100px] shrink-0 border-r border-[#222] bg-[#535353] pt-1 pr-0.5 pl-1 text-[11px] text-[#bbb]">
          <button className="block h-[19px] pl-[5px] leading-[19px]">gain</button>
          <div className="rounded-b bg-[#606060]">
            {PARAMS.map((p) => <button key={p} className="block h-[19px] pl-[5px] leading-[19px]">{p}</button>)}
          </div>
        </div>
        <div className={`min-w-0 flex-1 bg-[#476067] ${ROLL_GRID}`}>
          <div className="h-[25px] border-b border-dotted border-[#2b4047]" />
        </div>
      </div>
    </Window>
  );
}

/* ---------- synth ---------- */
const ENV = [["att", "0.04", 4], ["hold", "0.00", 0], ["dec", "0.08", 8], ["sus", "0.75", 74], ["rel", "0.25", 5]] as const;
const LFO = [["del", "0.00", 0], ["att", "1.00", 25], ["spd", "1.00", 5], ["amp", "1.00", 100]] as const;
const LFO_PATH: [number, number][] = [[0, 23.500], [25, 19], [65, 37], [105, 6.500], [148, 41], [192, 6.500], [234, 41], [278, 6.500], [320, 41], [352, 12]];
const SHAPES = ["M1 5q3-7 6 0t6 0", "M1 5l3-3 6 6 3-3", "M1 6l6-4v7l6-4", "M1 9h3V1h5v8h4"];

const Param = ({ name, v }: { name: string; v: string }) => (
  <div className="flex h-[14px] items-center justify-center text-xs font-medium text-[#b4b4b4]">
    {name}<span className={`ml-0.5 whitespace-pre ${NARROW}`}>· {v}</span>
  </div>
);
function Oscillator({ amp, pitch, pitchLen, gain, gainLen }: { amp: number; pitch: string; pitchLen: number; gain: string; gainLen: number }) {
  return (
    <div className="flex h-[60px] bg-[#666]">
      <div className="flex w-5 items-center justify-center bg-[#5a5a5a] text-[#c4c4c4]"><Grip className="h-[11px] w-2" /></div>
      <div className="relative m-1.5 mr-0.5 h-12 flex-1 rounded bg-[#3d3d3d]">
        <svg className="absolute inset-0 h-full w-full" viewBox="0 0 232 48" preserveAspectRatio="none">
          <path d={`M0 34C20 ${34 - amp * 0.5} 35 ${34 - amp} 60 ${34 - amp}C100 ${34 - amp} 130 ${34 + amp} 176 ${34 + amp}C200 ${34 + amp} 215 ${34 + amp * 0.6} 232 34.500`} fill="none" stroke="#b89ad6" strokeWidth="1.500" />
        </svg>
        <div className="relative flex items-center gap-2 pt-0.5 pl-1 text-[#999]">
          <button aria-label="Previous wave"><svg viewBox="0 0 6 10" className="h-2.5 w-1.5" fill="currentColor"><path d="M6 0v10L0 5z" /></svg></button>
          <button aria-label="Next wave"><svg viewBox="0 0 6 10" className="h-2.5 w-1.5" fill="currentColor"><path d="M0 0v10l6-5z" /></svg></button>
          <span className="pl-0.5 text-[13px] leading-4">sine</span>
        </div>
      </div>
      <div className="relative flex w-[140px] pt-1.5 pl-px">
        <Knob label="pitch" color="#fff" from={90} len={pitchLen} inner text={pitch} tone="text-white" />
        <Knob label="pan" color="#d08be0" from={0} len={0} text="0.00" tone="text-[#cf90e0]" />
        <Knob label="gain" color="#f8ff9a" from={90} len={gainLen} text={gain} tone="text-[#eff596]" />
        <button aria-label="Remove oscillator" className="absolute top-0.5 right-px text-[#b4b4b4]"><Cross className="size-2.5" /></button>
      </div>
    </div>
  );
}
const chip = "flex h-4 items-center gap-1 rounded-[3px] bg-[#666] px-1 text-xs font-semibold";
function Synth() {
  return (
    <Window place="left-[18px] top-[338px] h-[464px] w-[404px]" icon={<Pulse className="h-3 w-3.5" />} title="synth"
      extra={<div className="ml-2 flex items-center gap-1.5"><button className={`${chip} text-[#9fdca5]`}>synth</button><Arrow className="h-3 w-3.5" /><button className={`${chip} text-[#d48be0]`}><Faders className="size-2.5" />synth</button></div>}>
      <div className="flex h-6 shrink-0 items-center gap-2 bg-[#555] pl-2 text-[15px] text-[#8c8c8c]"><button aria-label="Toggle env gain"><Led /></button><h3>env gain</h3></div>
      <div className="h-[94px] shrink-0 bg-[#666] px-1.5 pt-[7px]">
        <div className="flex gap-1.5">
          {ENV.map(([n, v, f]) => <div key={n} className="flex w-0 flex-1 flex-col gap-[5px]"><Param name={n} v={v} /><HSlider label={n} value={f} /></div>)}
        </div>
        <svg className="mt-1.5 h-12 w-full rounded bg-[#484848]" viewBox="0 0 388 48" preserveAspectRatio="none">
          <path d="M48.500 0v48M96.500 0v48M145.500 0v48M242.500 0v48M290.500 0v48M339.500 0v48" stroke="#3c3c3c" />
          <path d="M.5 0v48M193.500 0v48M387.500 0v48" stroke="#222" />
          <path d="M0 47L7.500 6 23 17H339l48 30z" fill="#f8ff9a" fillOpacity=".13" />
          <path d="M25 17H339" stroke="#a8ac6c" strokeWidth="2" strokeDasharray="12 4" />
          <path d="M0 47L7.500 6 23 17M339 17l48 30" stroke="#f8ff9a" strokeWidth="2" fill="none" />
        </svg>
      </div>
      <div className="flex h-6 shrink-0 items-center gap-2 bg-[#555] pl-2 text-[15px] text-[#8c8c8c]"><button aria-label="Toggle LFO gain"><Led on={false} /></button><h3>LFO gain</h3></div>
      <div className="flex h-[94px] shrink-0 gap-1.5 bg-[#666] px-1.5 pt-[7px]">
        <div className="w-8">
          <div className="mb-[5px] text-center text-xs leading-[14px] font-medium text-[#bbb]">wave</div>
          <div className="overflow-hidden rounded bg-[#505050]">
            {SHAPES.map((d, k) => (
              <button key={d} aria-label={`LFO wave ${k + 1}`} className={`flex w-full items-center justify-center ${k === 0 ? "h-4 bg-[#7c7c7c] text-[#505050]" : "h-[15px] text-[#7c7c7c]"}`}>
                <svg viewBox="0 0 14 10" className="h-2.5 w-3.5" fill="none" stroke="currentColor" strokeWidth="1.500"><path d={d} /></svg>
              </button>
            ))}
          </div>
        </div>
        <div className="min-w-0 flex-1">
          <div className="flex gap-1.5">
            {LFO.map(([n, v, f]) => <div key={n} className="flex w-0 flex-1 flex-col gap-[5px]"><Param name={n} v={v} /><HSlider label={`LFO ${n}`} value={f} fill="#7f7f7f" /></div>)}
          </div>
          <div className="mt-1.5 flex h-12 overflow-hidden rounded bg-[#484848]">
            <div className="flex w-2.5 flex-col">
              <button aria-label="Positive" className="flex flex-1 items-center justify-center bg-[#7c7c7c] text-[#555]"><Caret className="h-1 w-1.5 rotate-180" /></button>
              <button aria-label="Negative" className="flex flex-1 items-center justify-center bg-[#555] text-[#7c7c7c]"><Caret className="h-1 w-1.5" /></button>
            </div>
            <svg className="h-12 min-w-0 flex-1" viewBox="0 0 340 48" preserveAspectRatio="none" fill="none">
              <path d="M19.500 0v48M40.500 0v48M62.500 0v48M105.500 0v48M126.500 0v48M148.500 0v48M191.500 0v48M213.500 0v48M234.500 0v48M277.500 0v48M298.500 0v48M320.500 0v48" stroke="#3c3c3c" />
              <path d="M83.500 0v48M169.500 0v48M255.500 0v48" stroke="#222" />
              <path d={swing(LFO_PATH)} stroke="#858585" strokeWidth="2" />
            </svg>
          </div>
        </div>
      </div>
      <div className="flex h-6 shrink-0 items-center bg-[#555] pl-1.5 text-[15px] text-[#8c8c8c]">
        <h3 className="flex-1">oscillators</h3>
        <div className="flex w-[148px] text-center text-[13px] text-[#b4b4b4]"><span className="w-[46px]">pitch</span><span className="w-[50px]">pan</span><span className="w-[46px]">gain</span></div>
      </div>
      <Oscillator amp={10} pitch="0.00" pitchLen={0} gain="0.75" gainLen={0.75} />
      <Oscillator amp={2.500} pitch="-24.00" pitchLen={0.5} gain="0.20" gainLen={0.2} />
      <div className={`flex-1 p-1.5 ${STRIPES}`}><AddBox label="Add oscillator" className="h-10 w-full" /></div>
    </Window>
  );
}

/* ---------- browser chrome ---------- */
function BrowserChrome() {
  return (
    <header className="shrink-0">
      <div className="h-0.5 bg-[#26292e]" />
      <div className="flex h-8 items-stretch bg-[#243657] pl-2 text-white">
        <div className="flex w-60 items-center rounded-t-lg bg-white pr-3 pl-3 text-xs text-[#45494d] font-['Open_Sans',sans-serif]">
          <svg viewBox="0 0 16 16" className="mr-2 size-4" fill="none" stroke="#111" strokeWidth="1.300">
            <path d="M6.500 1A7 7 0 0 0 6 14.800M9.500 1a7 7 0 0 1 .5 13.800" />
            <path d="M11 4.500A4.500 4.500 0 1 0 11.500 9V8H8.500v5" strokeWidth="1.600" />
          </svg>
          <span className="flex-1">GridSound</span>
          <button aria-label="Close tab" className="text-[#333]"><svg viewBox="0 0 10 10" className="size-2.5" stroke="currentColor" strokeWidth="1.500"><path d="M1 1l8 8M9 1L1 9" /></svg></button>
        </div>
        <button aria-label="New tab" className="ml-4"><svg viewBox="0 0 12 12" className="size-3" stroke="currentColor" strokeWidth="1.800"><path d="M0 6h12M6 0v12" /></svg></button>
        <div className="ml-auto flex h-6 items-center gap-9 pr-[18px]">
          <button aria-label="Search tabs"><svg viewBox="0 0 10 6" className="h-1.5 w-2.5" fill="none" stroke="currentColor"><path d="M0 0l5 5 5-5" /></svg></button>
          <button aria-label="Minimize window" className="flex h-2.5 items-center"><span className="h-px w-2.5 bg-white" /></button>
          <button aria-label="Restore window"><svg viewBox="0 0 10 10" className="size-2.5" fill="none" stroke="currentColor"><path d="M.5 2.500h7v7h-7zM2.500 2.500v-2h7v7h-2" /></svg></button>
          <button aria-label="Close window"><svg viewBox="0 0 10 10" className="size-2.5" stroke="currentColor" strokeWidth="1.200"><path d="M0 0l10 10M10 0L0 10" /></svg></button>
        </div>
      </div>
      <div className="flex h-[37px] items-center border-b border-[#cfd6d3] bg-white pr-4 text-[#5f6368]">
        <button aria-label="Back" className="ml-3 text-[#b4b6b8]"><MdArrowBack className="size-[18px]" /></button>
        <button aria-label="Forward" className="ml-3.5 text-[#b4b6b8]"><MdArrowForward className="size-[18px]" /></button>
        <button aria-label="Reload" className="ml-3.5"><MdRefresh className="size-5" /></button>
        <div className="ml-3 flex h-7 flex-1 items-center rounded-full bg-[#f1f3f4] pr-2.5 pl-2.5">
          <MdLock className="mr-2 size-4" />
          <input aria-label="Address" defaultValue="https://gridsound.com/daw/" className="min-w-0 flex-1 bg-transparent text-sm text-[#3c4043] font-['Open_Sans',sans-serif]" />
          <button aria-label="Share"><svg viewBox="0 0 16 16" className="mr-4 size-4" fill="none" stroke="currentColor" strokeWidth="1.400"><path d="M1 5v10h11v-3M4 11q1-5 7-5V3l4 4-4 4V8.500q-4 0-7 2.500z" /></svg></button>
          <button aria-label="Bookmark"><MdStarBorder className="size-[18px]" /></button>
        </div>
        <div className="flex items-center gap-4 pl-3">
          <svg viewBox="0 0 22 22" className="-mr-1.5 h-[22px] w-[22px]" fill="none">
            <path d="M0 3h16v12H0z" fill="#ddd" /><path d="M1.500 15V4L8 10l6.500-6v11" stroke="#888" strokeWidth="3" />
            <rect x="10" y="11" width="12" height="11" rx="2" fill="#bbb" />
            <path d="M14 15q0-2 2-2t2 1.500-2 2.500M16 18.500V20" stroke="#222" strokeWidth="1.400" />
          </svg>
          <svg viewBox="0 0 16 16" className="size-4"><path d="M8 0l8 8-5 6H5L0 8z" fill="#848484" /><path d="M3.500 8.500L8 4M6 10l4.500-4.500M8 12l2.500-2.500" stroke="#fff" strokeWidth="1.600" /></svg>
          <svg viewBox="0 0 16 16" className="size-4"><path d="M0 0h16v16H0z" fill="#46577a" /><path d="M1 2.500h14V16H1z" fill="#7cc242" /><circle cx="8" cy="8.500" r="5" fill="#4aa52e" /><path d="M5 7a3.300 3.300 0 1 1 .5 4M5 4.500V8h3" stroke="#fff" strokeWidth="1.600" fill="none" /></svg>
          <svg viewBox="0 0 16 16" className="size-4"><rect width="16" height="16" rx="1.500" fill="#3c4fe0" /><path d="M3 2h9v6q0 4-4.500 6Q3 12 3 8z" fill="#fff" /><path d="M7.500 3.500H11V8q0 2-3.500 4z" fill="#3c4fe0" /><rect x="9" y="9.500" width="7" height="6.500" rx="1" fill="#3a3a3a" /><path d="M10.700 9.500V8.300a1.800 1.800 0 0 1 3.600 0v1.200" stroke="#3a3a3a" fill="none" /></svg>
          <svg viewBox="0 0 16 16" className="size-4"><rect width="16" height="16" rx="1.500" fill="#dd4b39" /><path d="M0 5l3.500 2L10 3M0 8.500l3.500 2 6.500-4M0 12l3.500 2L10 10" stroke="#fff" strokeWidth="1.300" fill="none" /></svg>
          <svg viewBox="0 0 16 16" className="size-4"><circle cx="8" cy="8" r="8" fill="#999" /><circle cx="8" cy="8" r="4" stroke="#e8e8e8" strokeWidth="1.500" fill="none" /><path d="M8 3v5" stroke="#eee" strokeWidth="1.600" /></svg>
          <MdExtension className="size-4" />
          <MdQueueMusic className="size-5 -mx-0.5" />
          <svg viewBox="0 0 14 14" className="size-3.5"><path d="M0 0h14v14H0z" fill="#5f6368" /><path d="M2 2.500h6.500v9H2z" fill="#fff" /></svg>
          <svg viewBox="0 0 22 22" className="-mr-1 size-[22px]"><clipPath id="face"><circle cx="11" cy="11" r="11" /></clipPath><g clipPath="url(#face)"><path d="M0 0h22v22H0z" fill="#c4c0b0" /><path d="M0 5l7 3 4 6-3 2-8-2z" fill="#6d6a5f" /><path d="M12 4q8-2 10 5v8l-6 2-5-5z" fill="#2d2522" /><path d="M12 11l4-1 1 4-3 2z" fill="#e3b094" /><path d="M4 12l5 1 2 3-4 2z" fill="#efece4" /><path d="M6 17l6-1 1 6H5z" fill="#3e3a36" /><circle cx="11" cy="20" r="2.500" fill="#e858a8" /></g></svg>
          <button aria-label="Menu" className="-mr-1.5"><MdMoreVert className="size-5" /></button>
        </div>
      </div>
    </header>
  );
}

/* ---------- application bar ---------- */
const toolBox = "flex h-7 items-center rounded";
const TOGGLES: [string, React.ReactNode, boolean][] = [
  ["mixer", <Faders className="size-3" />, true],
  ["composition", <FaMusic className="size-3" />, true],
  ["synth", <Pulse className="h-3 w-3.5" />, true],
  ["drums", <Dots className="h-2.5 w-3.5" />, true],
  ["pianoroll", <PianoIcon className="h-2 w-3" />, true],
  ["slicer", <SlicesIcon className="size-[11px]" />, false],
  ["effects", <FaLayerGroup className="size-3" />, false],
];
function AppBar() {
  return (
    <div className="flex h-[60px] shrink-0 justify-between bg-[#444] px-1 pt-1">
      <div className="flex gap-1">
        <div className="flex w-[260px] flex-col gap-1">
          <div className="flex h-7 items-center">
            <h1 className={`w-[116px] text-[25px] leading-7 text-[#ddd] ${NARROW}`}>GridSound</h1>
            <button aria-label="Account" className="text-[#8a8a8a]"><FaUserCircle className="size-[22px]" /></button>
            <button aria-label="Playlist" className="ml-3">
              <svg viewBox="0 0 18 18" className="size-[18px]" fill="none"><path d="M0 3h10M0 7h10M0 11h7" stroke="#7076a8" strokeWidth="2" /><circle cx="10.500" cy="14.500" r="3" fill="#a9abf5" /><path d="M12.500 14V2l5-1.500" stroke="#a9abf5" strokeWidth="2" /></svg>
            </button>
          </div>
          <button className="flex h-5 items-center rounded-[3px] bg-[#6d72aa] pl-1 text-[15px] text-[#d8d9ea]">
            <svg viewBox="0 0 18 14" className="mr-1.5 h-3.5 w-[18px]" fill="none"><rect x="1" y="1" width="16" height="10" rx="1" stroke="#d8d9ea" strokeWidth="2" /><path d="M7 8.500V4l4-1v4.500M4 13h10" stroke="#d8d9ea" strokeWidth="1.600" /></svg>
            <i className="text-[#b9bbda]">Untitled</i><span className="ml-2 text-sm">· 0:02</span>
          </button>
        </div>
        <div className="flex flex-col gap-1">
          <div className="flex gap-1">
            <span className="h-7 w-1.5 rounded-[3px] bg-[#6d72aa]" />
            <div className={`${toolBox} w-[95px] bg-[#6f74ab] pl-2 text-[#c9cbe8]`}>
              <span className="flex flex-col gap-1"><span className="size-[5px] rounded-[1px] bg-[#e4e5f4]" /><span className="size-[5px] rounded-[1px] bg-[#9fa3cf]" /></span>
              <button aria-label="Play" className="ml-2.5"><svg viewBox="0 0 13 14" className="h-3.5 w-[13px]"><path d="M1 1l11 6-11 6z" fill="#9fa3cf" stroke="#e4e5f4" strokeWidth="1.500" strokeLinejoin="round" /></svg></button>
              <button aria-label="Stop" className="ml-3 size-[13px] rounded-[1px] border-2 border-[#e4e5f4] bg-[#a9acd6]" />
              <button aria-label="Loop" className="ml-3"><FaSyncAlt className="size-3.5" /></button>
            </div>
            <div className={`${toolBox} w-[87px] bg-[#222] pr-1.5 pl-2 text-[#ccc] ${NARROW}`}>
              <span className="text-lg leading-6">0:00</span>
              <span className="ml-auto flex flex-col items-end"><span className="text-[8px] leading-[9px] text-[#666]">sec</span><span className="text-xs leading-[13px] text-[#777]">.000</span></span>
              <span className="ml-1.5 flex flex-col gap-1"><span className="size-[5px] rounded-[1px] bg-[#555]" /><span className="size-[5px] rounded-[1px] bg-[#ccc]" /></span>
            </div>
            <button className={`${toolBox} w-[78px] bg-[#222] pr-1.5 pl-2 text-[#ccc] ${NARROW}`}>
              <span className="flex flex-col text-[10px] leading-[10px]"><span>4</span><span>4</span></span>
              <span className="ml-1.5 text-lg leading-6">120</span><span className="ml-auto pt-0.5 text-[10px] text-[#777]">BPM</span>
            </button>
            <div className={`${toolBox} w-[70px] bg-[#727272] pl-[7px] text-[#b4b4b4]`}>
              <button aria-label="Undo"><FaUndoAlt className="size-3.5" /></button>
              <button aria-label="Redo" className="ml-2.5"><FaRedoAlt className="size-3.5" /></button>
              <button aria-label="History" className="ml-2.5 text-[#ccc]"><Caret className="h-[5px] w-2" /></button>
            </div>
            <div className="h-7 w-[140px] rounded bg-[#1e1e1e]" />
            <button aria-label="Export" className={`${toolBox} w-7 justify-center bg-[#555]`}>
              <svg viewBox="0 0 16 16" className="size-4"><path d="M6.500 0h3v6H13l-5 5-5-5h3.500z" fill="#b4b878" /><path d="M1 10.500h4l3 3 3-3h4v4.500H1z" fill="#f8ff9a" /></svg>
            </button>
            <button aria-label="Settings" className={`${toolBox} w-7 justify-center bg-[#555] text-[#aaa]`}><FaCog className="size-3.5" /></button>
          </div>
          <div className="flex gap-1">
            <div className="flex h-5 w-[278px] items-center rounded bg-[#363636] px-2">
              <input type="range" aria-label="Position" defaultValue={0} className="h-1 w-full appearance-none rounded-full bg-[#222] [&::-webkit-slider-thumb]:size-0 [&::-webkit-slider-thumb]:appearance-none" />
            </div>
            <div className="flex h-5 flex-1 overflow-hidden rounded">
              {TOGGLES.map(([name, icon, on], k) => (
                <button key={name} aria-label={name} className={`flex flex-1 items-center justify-center ${k ? "border-l border-dashed border-[#0004]" : ""} ${on ? "bg-[#f8ff9a] text-[#444]" : "bg-[#222] text-[#ccc]"}`}>{icon}</button>
              ))}
            </div>
          </div>
        </div>
      </div>
      <div className="flex flex-col items-end gap-1">
        <div className="flex gap-1">
          <button aria-label="Cookies" className={`${toolBox} w-7 justify-center bg-[#555] text-[#aaa] outline-2 outline-[#b4b878]`}><FaCookie className="size-3.5" /></button>
          <button aria-label="Help" className={`${toolBox} w-7 justify-center bg-[#555]`}>
            <svg viewBox="0 0 16 14" className="h-3.5 w-4"><path d="M0 3h3v11H0zM13 3h3v11h-3z" fill="#d8dde8" /><path d="M5 0h6v3h1v11H4V3h1z" fill="#d8d8d8" /><path d="M6.500 1.500h3V3h-3z" fill="#555" /><path d="M8 6v5M5.500 8.500h5" stroke="#444" strokeWidth="1.600" /></svg>
          </button>
          <button aria-label="Seasonal" className={`${toolBox} w-7 justify-center bg-[#555]`}>
            <svg viewBox="0 0 18 14" className="h-3.5 w-[18px]"><path d="M2 10Q4 0 9.500 0q5 1 6 5l-2 5z" fill="#b4b878" /><path d="M0 10.500h14q1.500 0 1.500 1.500T14 13.500H1q-1.500-1.500-1-3z" fill="#f8ff9a" /><circle cx="15.500" cy="6" r="2.300" fill="#f8ff9a" /></svg>
          </button>
        </div>
        <a href="#changelog" className="flex h-5 items-center gap-1 text-[#6c6c6c]"><span className={`text-sm ${NARROW}`}>0.39.2</span><FaScroll className="size-[17px]" /></a>
      </div>
    </div>
  );
}

/* ---------- page ---------- */
export default function App() {
  return (
    <div className={`flex h-screen min-h-[720px] flex-col overflow-hidden border-b border-black bg-[#222] ${UI}`}>
      <BrowserChrome />
      <AppBar />
      <main className="flex min-h-0 flex-1">
        <aside className="flex w-[324px] shrink-0 flex-col border-r-2 border-[#5a5a5a]">
          <div className="flex h-6 shrink-0 items-center gap-1 bg-[#666] px-1.5 text-xs font-semibold text-[#bbb]">
            <Sound className="size-3.5" />
            <h2>library</h2>
            <div className="ml-2 flex h-[18px] items-center gap-1.5 rounded bg-[#484848] px-1.5 text-[10px]"><button className="font-bold text-white">default</button><button className="text-[#808080]">local</button></div>
          </div>
          <Library />
          <div className="h-2 shrink-0 bg-[#222]"><div className="h-full w-4/5 bg-[#dcdcdc]" /></div>
        </aside>
        <aside className="flex w-[326px] shrink-0 flex-col border-r-4 border-[#777] bg-[#444]">
          <PanelHead icon={<Sound className="size-3.5" />} title="buffers" />
          <div className="flex h-[166px] shrink-0 overflow-hidden">
            <div className="flex min-w-0 flex-1 flex-col overflow-hidden">
              {BUFFERS.map((b) => <BufferItem key={b.name} name={b.name} art={b.art} />)}
              <div className="h-1 shrink-0 bg-[#2b2936]" />
            </div>
            <div className="w-2 shrink-0 bg-[#222]"><div className="h-[101px] bg-[#ddd]" /></div>
          </div>
          <div className="h-1 shrink-0 bg-[#777]" />
          <PanelHead icon={<SlicesIcon className="size-[11px]" />} title="slices" plus="text-[#e8a088]" />
          <div className={`flex h-[161px] shrink-0 items-center justify-center text-[13px] font-semibold text-[#888] ${STRIPES}`}>no slices yet</div>
          <div className="h-1 shrink-0 bg-[#777]" />
          <PanelHead icon={<Dots className="h-2.5 w-3.5" />} title="drums" plus="text-[#8fd0f5]" />
          <div className={`h-[162px] shrink-0 ${STRIPES}`}><PatternItem name="drums" head="bg-[#82b6d3]" body="bg-[#60a4c9]" /></div>
          <div className="h-1 shrink-0 bg-[#777]" />
          <PanelHead icon={<Pulse className="h-3 w-3.5" />} title="keys" plus="text-[#9fdca5]" />
          <div className={`min-h-0 flex-1 ${STRIPES}`}>
            <div className="flex h-8 bg-[#71d27a] text-xs font-semibold text-[#3c6340]">
              <button aria-label="Collapse synth" className="flex w-4 items-center justify-center bg-[#62b96b]"><Caret className="h-1 w-[7px]" /></button>
              <div className="flex flex-1 items-center pr-1 pl-1.5">
                synth<Arrow className="mx-1 size-2.5 opacity-80" />
                <button className="flex h-4 items-center gap-1 rounded-[3px] bg-[#62b96b] px-1.5"><Faders className="size-2.5" />synth</button>
                <button aria-label="Add pattern" className="ml-auto"><svg viewBox="0 0 10 10" className="size-2.5" stroke="currentColor" strokeWidth="1.500"><path d="M0 5h10M5 0v10" /></svg></button>
                <button aria-label="Remove synth" className="ml-2.5"><Cross className="size-2.5" /></button>
              </div>
            </div>
            <div className="border-b-2 border-[#71d27a]"><PatternItem name="keys" head="bg-[#8fcaea]" body="bg-[#69b5de]" /></div>
          </div>
        </aside>
        <div className="relative min-w-0 flex-1 overflow-hidden bg-[#222]">
          <Backdrop />
          <section className="absolute top-[448px] left-[68px] flex h-[404px] w-[904px] flex-col overflow-hidden rounded border-2 border-[#4a4a4a] bg-[#444]">
            <div className="h-6 shrink-0 bg-[#888]" />
            <div className="h-8 shrink-0 bg-[#222]" />
            <div className="flex min-h-0 flex-1">
              <div className="w-[141px] border-r border-[#222] bg-[#555]" />
              <div className="flex-1 bg-[#476067]">{[0, 1, 2, 3, 4].map((r) => <div key={r} className="h-12 border-b border-[#34494f]" />)}</div>
            </div>
          </section>
          <Window place="left-[18px] top-[18px] h-[304px] w-[404px]" icon={<Faders className="size-3" />} title="mixer">
            <div className={`flex min-h-0 flex-1 ${STRIPES}`}>
              <Channel name="main" gain={40} main />
              <div className="w-1.5" />
              <Channel name="drums" gain={100} />
              <Channel name="synth" gain={100} alt />
              <Channel name="chan 3" gain={100} />
              <Channel name="chan 4" gain={100} alt />
              <AddBox label="Add channel" className="m-1.5 w-10" />
            </div>
          </Window>
          <Synth />
          <Composition />
          <PianoRoll />
        </div>
      </main>
    </div>
  );
}
